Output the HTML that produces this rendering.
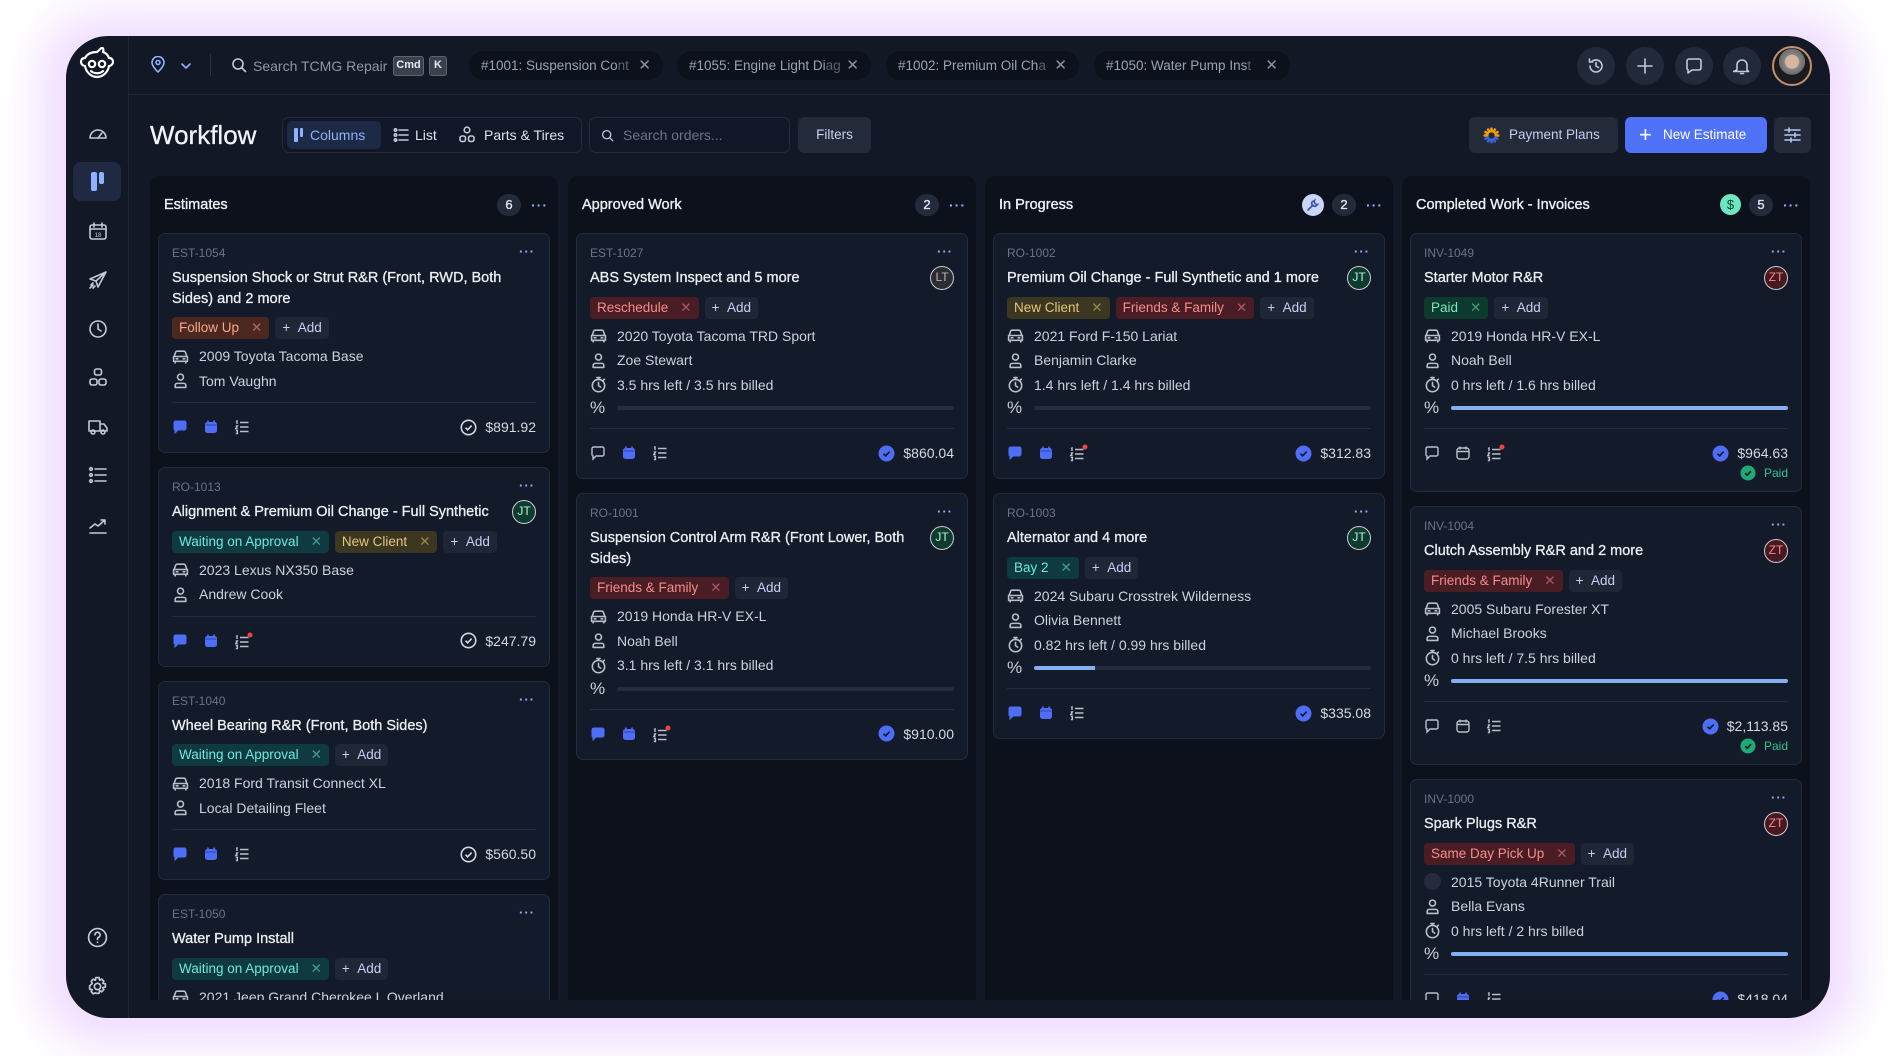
<!DOCTYPE html>
<html><head><meta charset="utf-8">
<style>
*{box-sizing:border-box;margin:0;padding:0}
body{width:1896px;height:1056px;overflow:hidden;background:#fff;font-family:"Liberation Sans",sans-serif;position:relative}
.glow{position:absolute;left:40px;top:14px;width:1816px;height:1030px;border-radius:60px;background:#efdcff;filter:blur(22px)}
.win{position:absolute;left:66px;top:36px;width:1764px;height:982px;border-radius:42px;background:#121826;overflow:hidden}
.side{position:absolute;left:0;top:0;width:63px;height:100%;border-right:1px solid #1e2535}
.top{position:absolute;left:63px;top:0;right:0;height:59px;border-bottom:1px solid #1f2636}
svg{display:block}
.ic{position:absolute;stroke:#c3c9d5;fill:none;stroke-width:1.6;stroke-linecap:round;stroke-linejoin:round}
.tab{position:absolute;top:15px;height:29px;border-radius:15px;background:#0c111c;color:#9aa3b2;font-size:13.5px;line-height:29px;padding-left:12px;white-space:nowrap;overflow:hidden}
.tab span{position:absolute;right:12px;top:0;color:#8a93a3;font-size:15px;background:#0c111c}
.tab i{font-style:normal;color:#5a6270}
.cbtn{position:absolute;top:11px;width:38px;height:38px;border-radius:50%;background:#222a3a}
.col{position:absolute;top:140px;width:408px;height:824px;background:#0c111c;border-radius:10px 10px 0 0;overflow:hidden}
.colh{height:57px;display:flex;align-items:center;padding:0 10px 0 14px;color:#eef0f4;font-size:14.5px;font-weight:400;-webkit-text-stroke:.35px #eef0f4}
.colh .sp{flex:1}
.cnt{width:24px;height:22px;border-radius:11px;background:#232a3a;color:#d7dbe3;font-size:13px;text-align:center;line-height:22px;margin-left:8px}
.dots{color:#8fb1ff;font-size:14px;letter-spacing:1px;margin-left:10px;font-weight:700;-webkit-text-stroke:0}
.card{margin:0 8px 14px 8px;background:#131a29;border:1px solid #232b3c;border-radius:7px;padding:12px 13px 0 13px;position:relative}
.cid{height:14px;font-size:12px;color:#6b7384;line-height:14px}
.cdots{position:absolute;right:14px;top:10px;color:#8fb1ff;font-size:13px;font-weight:700;letter-spacing:1px}
.ttl{margin-top:8px;font-size:14.5px;line-height:20.5px;color:#eceef2;font-weight:400;-webkit-text-stroke:.3px #eceef2;padding-right:36px;position:relative}
.av{position:absolute;right:0;top:-2px;width:24px;height:24px;border-radius:50%;font-size:12px;line-height:21px;text-align:center;font-weight:400;border:1.5px solid #c9ccd2;-webkit-text-stroke:0}
.jt{background:#0e3b2f;color:#b6f3d8}
.lt{background:#2c2d33;color:#b8b3ad}
.zt{background:#4a1820;color:#f28c8c}
.tags{margin-top:8px;display:flex;gap:6px;height:22px}
.tg{height:22px;border-radius:4px;font-size:13.5px;line-height:22px;padding:0 7px;white-space:nowrap}
.tg b{font-weight:400;opacity:.55;margin-left:12px}
.add{background:#1f2636;color:#c5d0f5}
.fu{background:#4b2720;color:#f6a789}
.wa{background:#0f3a40;color:#6ee7e0}
.nc{background:#3c3720;color:#e3c67e}
.ff{background:#4a1d25;color:#f58c8c}
.pd{background:#0c3a2e;color:#7fe5bd}
.rows{margin-top:5px}
.row{height:24.5px;display:flex;align-items:center;color:#ccd2dc;font-size:14px}
.row svg{margin-right:10px;flex:none;stroke:#b9bfca;fill:none;stroke-width:1.5;stroke-linecap:round;stroke-linejoin:round}
.pct{height:22px;display:flex;align-items:center}
.pct .p{width:17px;color:#c9ced8;font-size:17px;margin-right:10px}
.bar{flex:1;height:4px;border-radius:2px;background:#252c3d;overflow:hidden}
.bar div{height:100%;background:#86aef3}
.div{height:1px;background:#232b3c;margin-top:9px}
.foot{padding:12px 0 13px;position:relative}
.fr{height:24px;display:flex;align-items:center}
.fr .pr{margin-left:auto;display:flex;align-items:center;color:#d5d9e0;font-size:14px}
.fr .pr svg{margin-right:8px}
.paid{text-align:right;color:#34c48e;font-size:12px;height:20px;line-height:18px;margin-top:-2px;display:flex;justify-content:flex-end;align-items:center}
.paid svg{margin-right:8px}
.hb{position:absolute;top:81px;height:36px;border-radius:6px;font-size:13.5px;line-height:36px;color:#c4cfee}
</style></head><body>
<svg width="0" height="0" style="position:absolute">
<defs>
<symbol id="car" viewBox="0 0 16 16"><path d="M2 8l1.5-4.2C3.7 3.3 4.2 3 4.7 3h6.6c.5 0 1 .3 1.2.8L14 8M1.5 8h13v4.5H1.5zM3 12.5v1.5M13 12.5v1.5M4 10.2h1.5M10.5 10.2H12"/></symbol>
<symbol id="usr" viewBox="0 0 16 16"><circle cx="8" cy="4.8" r="2.8"/><path d="M3 14.5v-2c0-1 .8-1.8 1.8-1.8h6.4c1 0 1.8.8 1.8 1.8v2z"/></symbol>
<symbol id="clk" viewBox="0 0 16 16"><circle cx="8" cy="9" r="5.8"/><path d="M8 6v3l2 1.5M6.5 1.5h3M8 1.5v1.7M12.5 4l1-1"/></symbol>
<symbol id="chatf" viewBox="0 0 16 16"><path d="M2 3.5C2 2.7 2.7 2 3.5 2h9c.8 0 1.5.7 1.5 1.5v6c0 .8-.7 1.5-1.5 1.5H6l-3 3v-3h0C2.4 11 2 10.4 2 9.5z" fill="#4f6ef7" stroke="#4f6ef7"/></symbol>
<symbol id="chato" viewBox="0 0 16 16"><path d="M2 3.5C2 2.7 2.7 2 3.5 2h9c.8 0 1.5.7 1.5 1.5v6c0 .8-.7 1.5-1.5 1.5H6l-3 3v-3h0C2.4 11 2 10.4 2 9.5z" fill="none" stroke="#b9bfca" stroke-width="1.4"/></symbol>
<symbol id="calf" viewBox="0 0 16 16"><rect x="2" y="3" width="12" height="11" rx="2.5" fill="#4f6ef7"/><path d="M5 1.5v3M11 1.5v3" stroke="#4f6ef7" stroke-width="1.6"/><path d="M2.5 6h11" stroke="#2a43b0" stroke-width="1"/></symbol>
<symbol id="calo" viewBox="0 0 16 16"><rect x="2" y="3" width="12" height="11" rx="2.5" fill="none" stroke="#b9bfca" stroke-width="1.4"/><path d="M5 1.5v3M11 1.5v3M2 6.5h12" stroke="#b9bfca" stroke-width="1.4"/></symbol>
<symbol id="lst" viewBox="0 0 16 16"><path d="M6 3.5h8.5M6 8h8.5M6 12.5h8.5M2 2.5l1-.5v3M1.8 7h1.6L1.8 9.5h1.8M1.8 11.5h1.6v3H1.8" fill="none" stroke="#b9bfca" stroke-width="1.4"/></symbol>
<symbol id="chko" viewBox="0 0 16 16"><circle cx="8" cy="8" r="6.8" fill="none" stroke="#d5d9e0" stroke-width="1.5"/><path d="M5.2 8.2l2 2 3.8-4" fill="none" stroke="#d5d9e0" stroke-width="1.5"/></symbol>
<symbol id="chkb" viewBox="0 0 16 16"><circle cx="8" cy="8" r="7.5" fill="#4f6ef7"/><path d="M5.2 8.2l2 2 3.8-4" fill="none" stroke="#101828" stroke-width="1.6"/></symbol>
<symbol id="chkg" viewBox="0 0 16 16"><circle cx="8" cy="8" r="7.5" fill="#1fa878"/><path d="M5.2 8.2l2 2 3.8-4" fill="none" stroke="#0c1a14" stroke-width="1.6"/></symbol>
</defs></svg>
<div class="glow"></div>
<div class="win">
 <div class="side">
  <svg style="position:absolute;left:12px;top:11px" width="38" height="38" viewBox="0 0 38 38" fill="none" stroke="#fff" stroke-width="2.2" stroke-linecap="round" stroke-linejoin="round"><path d="M19 5c-6 0-10 2-12 6-3 0-4 2-4 4s2 4 4 4c1 6 6 11 12 11s11-5 12-11c2 0 4-2 4-4s-1-4-4-4c-1-3-3-5-6-6 1-2 0-4-1-5-1 2-3 3-5 5z"/><circle cx="14" cy="17" r="3.2"/><circle cx="24" cy="17" r="3.2"/><path d="M13 24c3 3 9 3 12 0"/></svg>
  <svg class="ic" style="left:22px;top:88px" width="20" height="20" viewBox="0 0 20 20"><path d="M2 14a8 8 0 0 1 16 0z"/><path d="M10 14l4-5"/></svg>
  <div style="position:absolute;left:7px;top:126px;width:48px;height:39px;border-radius:8px;background:#1f2a42"></div>
  <div style="position:absolute;left:25px;top:136px;width:6px;height:19px;border-radius:2px;background:#8fb1ff"></div>
  <div style="position:absolute;left:33px;top:136px;width:5px;height:12px;border-radius:2px;background:#8fb1ff"></div>
  <svg class="ic" style="left:22px;top:185px" width="20" height="20" viewBox="0 0 20 20"><rect x="2" y="4" width="16" height="14" rx="2"/><path d="M2 8h16M6 2v4M14 2v4"/><text x="10" y="16" font-size="6" fill="#c3c9d5" stroke="none" text-anchor="middle" font-family="Liberation Sans">18</text></svg>
  <svg class="ic" style="left:22px;top:234px" width="20" height="20" viewBox="0 0 20 20"><path d="M18 2L2 9l6 2 2 6zM8 11l10-9M3 15l2-2M2 18l3-3M5 18l2-2"/></svg>
  <svg class="ic" style="left:22px;top:283px" width="20" height="20" viewBox="0 0 20 20"><circle cx="10" cy="10" r="8"/><path d="M10 5v5l3 2"/></svg>
  <svg class="ic" style="left:22px;top:331px" width="20" height="20" viewBox="0 0 20 20"><rect x="6.5" y="2" width="7" height="6" rx="2"/><rect x="2" y="12" width="7" height="6" rx="2"/><rect x="11" y="12" width="7" height="6" rx="2"/></svg>
  <svg class="ic" style="left:21px;top:381px" width="22" height="20" viewBox="0 0 22 20"><path d="M2 4h11v10H2zM13 7h4l3 4v3h-7"/><circle cx="6" cy="15" r="2"/><circle cx="16" cy="15" r="2"/></svg>
  <svg class="ic" style="left:22px;top:429px" width="20" height="20" viewBox="0 0 20 20"><circle cx="3" cy="4" r="1.3"/><circle cx="3" cy="10" r="1.3"/><circle cx="3" cy="16" r="1.3"/><path d="M7 4h11M7 10h11M7 16h11"/></svg>
  <svg class="ic" style="left:22px;top:479px" width="20" height="20" viewBox="0 0 20 20"><path d="M2 13l5-4 3 2 7-6M13 5h4v4M2 18h16"/></svg>
  <svg class="ic" style="left:21px;top:891px" width="21" height="21" viewBox="0 0 20 20"><circle cx="10" cy="10" r="8.5"/><path d="M7.5 7.5a2.5 2.5 0 1 1 3.5 2.3c-.7.3-1 .8-1 1.5v.5M10 14.5v.1"/></svg>
  <svg class="ic" style="left:21px;top:940px" width="21" height="21" viewBox="0 0 20 20"><circle cx="10" cy="10" r="3"/><path d="M8.5 1.5h3l.5 2.5 2-1 2 2-1 2 2.5.5v3l-2.5.5 1 2-2 2-2-1-.5 2.5h-3L8 16l-2 1-2-2 1-2-2.5-.5v-3L5 7 4 5l2-2 2 1z"/></svg>
 </div>
 <div class="top">
  <svg class="ic" style="left:21px;top:20px" width="16" height="18" viewBox="0 0 16 18"><path d="M8 16s-6-5.5-6-9.5a6 6 0 0 1 12 0C14 10.5 8 16 8 16z" stroke="#8fb1ff"/><circle cx="8" cy="6.5" r="2" stroke="#8fb1ff"/></svg>
  <svg class="ic" style="left:51px;top:26px" width="12" height="8" viewBox="0 0 12 8"><path d="M2 2l4 4 4-4" stroke="#8fb1ff"/></svg>
  <div style="position:absolute;left:81px;top:18px;width:1px;height:22px;background:#2a3142"></div>
  <svg class="ic" style="left:102px;top:21px" width="16" height="16" viewBox="0 0 16 16"><circle cx="7" cy="7" r="5"/><path d="M11 11l3.5 3.5"/></svg>
  <div style="position:absolute;left:124px;top:21px;color:#8f97a6;font-size:14px;line-height:18px">Search TCMG Repair</div>
  <div style="position:absolute;left:264px;top:20px;width:31px;height:20px;border:1.5px solid #5d6574;background:#3a414e;border-radius:3px;color:#e8eaee;font-size:11px;line-height:17px;text-align:center;font-weight:700">Cmd</div>
  <div style="position:absolute;left:300px;top:20px;width:18px;height:20px;border:1.5px solid #5d6574;background:#3a414e;border-radius:3px;color:#e8eaee;font-size:11px;line-height:17px;text-align:center;font-weight:700">K</div>
  <div class="tab" style="left:340px;width:194px">#1001: Suspension Co<i>nt</i><span>✕</span></div>
  <div class="tab" style="left:548px;width:194px">#1055: Engine Light Di<i>ag</i><span>✕</span></div>
  <div class="tab" style="left:757px;width:193px">#1002: Premium Oil Ch<i>a</i><span>✕</span></div>
  <div class="tab" style="left:965px;width:196px">#1050: Water Pump Ins<i>t</i><span>✕</span></div>
  <div class="cbtn" style="left:1448px"><svg class="ic" style="left:10px;top:10px" width="18" height="18" viewBox="0 0 18 18"><path d="M3 9a6 6 0 1 0 2-4.5M2.5 2v3h3M9 5.5V9l2.5 1.5"/></svg></div>
  <div class="cbtn" style="left:1497px"><svg class="ic" style="left:10px;top:10px" width="18" height="18" viewBox="0 0 18 18"><path d="M9 2v14M2 9h14"/></svg></div>
  <div class="cbtn" style="left:1546px"><svg class="ic" style="left:10px;top:10px" width="18" height="18" viewBox="0 0 18 18"><path d="M2 4a2 2 0 0 1 2-2h10a2 2 0 0 1 2 2v7a2 2 0 0 1-2 2H7l-4 3v-3.2A2 2 0 0 1 2 11z"/></svg></div>
  <div class="cbtn" style="left:1594px"><svg class="ic" style="left:10px;top:10px" width="18" height="18" viewBox="0 0 18 18"><path d="M4 13V8a5 5 0 0 1 10 0v5l1.5 1.5h-15zM7.5 16.5h3"/></svg></div>
  <div style="position:absolute;left:1643px;top:10px;width:40px;height:40px;border-radius:50%;border:2px solid #c7906a;background:radial-gradient(circle at 50% 38%,#d8b49c 0 24%,#888 25%,#6b6b6b 45%,#1b1b1d 46%);overflow:hidden"></div>
 </div>
 <div style="position:absolute;left:84px;top:82px;color:#f2f4f7;font-size:26px;line-height:34px;-webkit-text-stroke:.3px #f2f4f7">Workflow</div>
 <div style="position:absolute;left:216px;top:81px;width:300px;height:36px;border:1px solid #232b3c;border-radius:7px;background:#111726"></div>
 <div style="position:absolute;left:221px;top:85px;width:94px;height:28px;border-radius:5px;background:#1d2a45"></div>
 <div style="position:absolute;left:228px;top:92px;width:4px;height:14px;background:#8fb1ff;border-radius:1px"></div>
 <div style="position:absolute;left:234px;top:92px;width:3px;height:9px;background:#8fb1ff;border-radius:1px"></div>
 <div style="position:absolute;left:244px;top:90px;color:#8fb1ff;font-size:14px;line-height:18px">Columns</div>
 <svg class="ic" style="left:327px;top:91px" width="16" height="16" viewBox="0 0 16 16"><circle cx="2.5" cy="3" r="1.2"/><circle cx="2.5" cy="8" r="1.2"/><circle cx="2.5" cy="13" r="1.2"/><path d="M6 3h9M6 8h9M6 13h9"/></svg>
 <div style="position:absolute;left:349px;top:90px;color:#dfe3ea;font-size:14px;line-height:18px">List</div>
 <svg class="ic" style="left:393px;top:90px" width="16" height="17" viewBox="0 0 16 17"><circle cx="8" cy="4" r="2.8"/><rect x="1" y="10" width="5.5" height="5.5" rx="2"/><rect x="9.5" y="10" width="5.5" height="5.5" rx="2"/></svg>
 <div style="position:absolute;left:418px;top:90px;color:#dfe3ea;font-size:14px;line-height:18px">Parts &amp; Tires</div>
 <div style="position:absolute;left:523px;top:81px;width:201px;height:36px;border:1px solid #232b3c;border-radius:7px;background:#111726"></div>
 <svg class="ic" style="left:535px;top:93px" width="13" height="13" viewBox="0 0 16 16"><circle cx="7" cy="7" r="5"/><path d="M11 11l3.5 3.5"/></svg>
 <div style="position:absolute;left:557px;top:90px;color:#6b7384;font-size:14px;line-height:18px">Search orders...</div>
 <div class="hb" style="left:732px;width:73px;background:#232a3a;text-align:center;color:#c7d2f0">Filters</div>
 <div class="hb" style="left:1403px;width:149px;background:#232a3a"><svg style="position:absolute;left:14px;top:10px" width="17" height="17" viewBox="0 0 20 20"><g stroke-width="3" stroke-linecap="round"><path d="M10 2v3M14 3l-1.5 2.6M17 6l-2.6 1.5M18 10h-3M6 3l1.5 2.6M3 6l2.6 1.5M2 10h3" stroke="#f59e0b"/><path d="M17 14l-2.6-1.5M14 17l-1.5-2.6M10 18v-3M6 17l1.5-2.6M3 14l2.6-1.5" stroke="#3b64d8"/></g></svg><span style="position:absolute;left:40px">Payment Plans</span></div>
 <div class="hb" style="left:1559px;width:142px;background:#4f72f8;color:#fff"><span style="position:absolute;left:14px;top:0;font-size:22px;font-weight:300">+</span><span style="position:absolute;left:38px">New Estimate</span></div>
 <div class="hb" style="left:1708px;width:37px;background:#232a3a"><svg class="ic" style="left:10px;top:10px" width="17" height="16" viewBox="0 0 17 16"><path d="M1 3h15M1 8h15M1 13h15M5 1v4M11 6v4M7 11v4" stroke="#b8c6ef"/></svg></div>

 <!-- Estimates -->
 <div class="col" style="left:84px">
  <div class="colh">Estimates<div class="sp"></div><div class="cnt">6</div><div class="dots">···</div></div>
  <div class="card"><div class="cid">EST-1054</div><div class="cdots">···</div>
   <div class="ttl" style="padding-right:0">Suspension Shock or Strut R&amp;R (Front, RWD, Both Sides) and 2 more</div>
   <div class="tags"><div class="tg fu">Follow Up<b>✕</b></div><div class="tg add">+ &nbsp;Add</div></div>
   <div class="rows"><div class="row"><svg width="17" height="17"><use href="#car"/></svg>2009 Toyota Tacoma Base</div><div class="row"><svg width="17" height="17"><use href="#usr"/></svg>Tom Vaughn</div></div>
   <div class="div"></div><div class="foot"><div class="fr"><svg width="31" height="16"><use href="#chatf" width="16" height="16"/></svg><svg width="31" height="16"><use href="#calf" width="16" height="16"/></svg><svg width="16" height="16"><use href="#lst"/></svg><div class="pr"><svg width="17" height="17"><use href="#chko"/></svg>$891.92</div></div></div>
  </div>
  <div class="card"><div class="cid">RO-1013</div><div class="cdots">···</div>
   <div class="ttl">Alignment &amp; Premium Oil Change - Full Synthetic<div class="av jt">JT</div></div>
   <div class="tags"><div class="tg wa">Waiting on Approval<b>✕</b></div><div class="tg nc">New Client<b>✕</b></div><div class="tg add">+ &nbsp;Add</div></div>
   <div class="rows"><div class="row"><svg width="17" height="17"><use href="#car"/></svg>2023 Lexus NX350 Base</div><div class="row"><svg width="17" height="17"><use href="#usr"/></svg>Andrew Cook</div></div>
   <div class="div"></div><div class="foot"><div class="fr"><svg width="31" height="16"><use href="#chatf" width="16" height="16"/></svg><svg width="31" height="16"><use href="#calf" width="16" height="16"/></svg><svg width="20" height="18" viewBox="0 0 20 18"><use href="#lst" y="2" width="16" height="16"/><circle cx="16" cy="3" r="2.5" fill="#ef4444"/></svg><div class="pr"><svg width="17" height="17"><use href="#chko"/></svg>$247.79</div></div></div>
  </div>
  <div class="card"><div class="cid">EST-1040</div><div class="cdots">···</div>
   <div class="ttl">Wheel Bearing R&amp;R (Front, Both Sides)</div>
   <div class="tags"><div class="tg wa">Waiting on Approval<b>✕</b></div><div class="tg add">+ &nbsp;Add</div></div>
   <div class="rows"><div class="row"><svg width="17" height="17"><use href="#car"/></svg>2018 Ford Transit Connect XL</div><div class="row"><svg width="17" height="17"><use href="#usr"/></svg>Local Detailing Fleet</div></div>
   <div class="div"></div><div class="foot"><div class="fr"><svg width="31" height="16"><use href="#chatf" width="16" height="16"/></svg><svg width="31" height="16"><use href="#calf" width="16" height="16"/></svg><svg width="16" height="16"><use href="#lst"/></svg><div class="pr"><svg width="17" height="17"><use href="#chko"/></svg>$560.50</div></div></div>
  </div>
  <div class="card"><div class="cid">EST-1050</div><div class="cdots">···</div>
   <div class="ttl">Water Pump Install</div>
   <div class="tags"><div class="tg wa">Waiting on Approval<b>✕</b></div><div class="tg add">+ &nbsp;Add</div></div>
   <div class="rows"><div class="row"><svg width="17" height="17"><use href="#car"/></svg>2021 Jeep Grand Cherokee L Overland</div><div class="row"><svg width="17" height="17"><use href="#usr"/></svg>Fleet</div></div>
  </div>
 </div>

 <!-- Approved -->
 <div class="col" style="left:502px">
  <div class="colh">Approved Work<div class="sp"></div><div class="cnt">2</div><div class="dots">···</div></div>
  <div class="card"><div class="cid">EST-1027</div><div class="cdots">···</div>
   <div class="ttl">ABS System Inspect and 5 more<div class="av lt">LT</div></div>
   <div class="tags"><div class="tg ff">Reschedule<b>✕</b></div><div class="tg add">+ &nbsp;Add</div></div>
   <div class="rows"><div class="row"><svg width="17" height="17"><use href="#car"/></svg>2020 Toyota Tacoma TRD Sport</div><div class="row"><svg width="17" height="17"><use href="#usr"/></svg>Zoe Stewart</div><div class="row"><svg width="17" height="17"><use href="#clk"/></svg>3.5 hrs left / 3.5 hrs billed</div><div class="pct"><span class="p">%</span><div class="bar"></div></div></div>
   <div class="div"></div><div class="foot"><div class="fr"><svg width="31" height="16"><use href="#chato" width="16" height="16"/></svg><svg width="31" height="16"><use href="#calf" width="16" height="16"/></svg><svg width="16" height="16"><use href="#lst"/></svg><div class="pr"><svg width="17" height="17"><use href="#chkb"/></svg>$860.04</div></div></div>
  </div>
  <div class="card"><div class="cid">RO-1001</div><div class="cdots">···</div>
   <div class="ttl">Suspension Control Arm R&amp;R (Front Lower, Both Sides)<div class="av jt">JT</div></div>
   <div class="tags"><div class="tg ff">Friends &amp; Family<b>✕</b></div><div class="tg add">+ &nbsp;Add</div></div>
   <div class="rows"><div class="row"><svg width="17" height="17"><use href="#car"/></svg>2019 Honda HR-V EX-L</div><div class="row"><svg width="17" height="17"><use href="#usr"/></svg>Noah Bell</div><div class="row"><svg width="17" height="17"><use href="#clk"/></svg>3.1 hrs left / 3.1 hrs billed</div><div class="pct"><span class="p">%</span><div class="bar"></div></div></div>
   <div class="div"></div><div class="foot"><div class="fr"><svg width="31" height="16"><use href="#chatf" width="16" height="16"/></svg><svg width="31" height="16"><use href="#calf" width="16" height="16"/></svg><svg width="20" height="18" viewBox="0 0 20 18"><use href="#lst" y="2" width="16" height="16"/><circle cx="16" cy="3" r="2.5" fill="#ef4444"/></svg><div class="pr"><svg width="17" height="17"><use href="#chkb"/></svg>$910.00</div></div></div>
  </div>
 </div>

 <!-- In Progress -->
 <div class="col" style="left:919px">
  <div class="colh">In Progress<div class="sp"></div><div style="width:22px;height:22px;border-radius:50%;background:#c9d6f7;position:relative"><svg style="position:absolute;left:4px;top:4px" width="14" height="14" viewBox="0 0 14 14" fill="none" stroke="#3b4fb0" stroke-width="1.6" stroke-linecap="round"><path d="M2 12l5-5M8.5 2.5a3 3 0 0 0 3 4l-1.5 1.5a3 3 0 0 1-4-4z"/></svg></div><div class="cnt">2</div><div class="dots">···</div></div>
  <div class="card"><div class="cid">RO-1002</div><div class="cdots">···</div>
   <div class="ttl">Premium Oil Change - Full Synthetic and 1 more<div class="av jt">JT</div></div>
   <div class="tags"><div class="tg nc">New Client<b>✕</b></div><div class="tg ff">Friends &amp; Family<b>✕</b></div><div class="tg add">+ &nbsp;Add</div></div>
   <div class="rows"><div class="row"><svg width="17" height="17"><use href="#car"/></svg>2021 Ford F-150 Lariat</div><div class="row"><svg width="17" height="17"><use href="#usr"/></svg>Benjamin Clarke</div><div class="row"><svg width="17" height="17"><use href="#clk"/></svg>1.4 hrs left / 1.4 hrs billed</div><div class="pct"><span class="p">%</span><div class="bar"></div></div></div>
   <div class="div"></div><div class="foot"><div class="fr"><svg width="31" height="16"><use href="#chatf" width="16" height="16"/></svg><svg width="31" height="16"><use href="#calf" width="16" height="16"/></svg><svg width="20" height="18" viewBox="0 0 20 18"><use href="#lst" y="2" width="16" height="16"/><circle cx="16" cy="3" r="2.5" fill="#ef4444"/></svg><div class="pr"><svg width="17" height="17"><use href="#chkb"/></svg>$312.83</div></div></div>
  </div>
  <div class="card"><div class="cid">RO-1003</div><div class="cdots">···</div>
   <div class="ttl">Alternator and 4 more<div class="av jt">JT</div></div>
   <div class="tags"><div class="tg wa">Bay 2<b>✕</b></div><div class="tg add">+ &nbsp;Add</div></div>
   <div class="rows"><div class="row"><svg width="17" height="17"><use href="#car"/></svg>2024 Subaru Crosstrek Wilderness</div><div class="row"><svg width="17" height="17"><use href="#usr"/></svg>Olivia Bennett</div><div class="row"><svg width="17" height="17"><use href="#clk"/></svg>0.82 hrs left / 0.99 hrs billed</div><div class="pct"><span class="p">%</span><div class="bar"><div style="width:18%"></div></div></div></div>
   <div class="div"></div><div class="foot"><div class="fr"><svg width="31" height="16"><use href="#chatf" width="16" height="16"/></svg><svg width="31" height="16"><use href="#calf" width="16" height="16"/></svg><svg width="16" height="16"><use href="#lst"/></svg><div class="pr"><svg width="17" height="17"><use href="#chkb"/></svg>$335.08</div></div></div>
  </div>
 </div>

 <!-- Completed -->
 <div class="col" style="left:1336px">
  <div class="colh">Completed Work - Invoices<div class="sp"></div><div style="width:21px;height:21px;border-radius:50%;background:#6ee7c0;color:#0b3d2e;font-size:13px;text-align:center;line-height:21px;-webkit-text-stroke:0">$</div><div class="cnt">5</div><div class="dots">···</div></div>
  <div class="card"><div class="cid">INV-1049</div><div class="cdots">···</div>
   <div class="ttl">Starter Motor R&amp;R<div class="av zt">ZT</div></div>
   <div class="tags"><div class="tg pd">Paid<b>✕</b></div><div class="tg add">+ &nbsp;Add</div></div>
   <div class="rows"><div class="row"><svg width="17" height="17"><use href="#car"/></svg>2019 Honda HR-V EX-L</div><div class="row"><svg width="17" height="17"><use href="#usr"/></svg>Noah Bell</div><div class="row"><svg width="17" height="17"><use href="#clk"/></svg>0 hrs left / 1.6 hrs billed</div><div class="pct"><span class="p">%</span><div class="bar"><div style="width:100%"></div></div></div></div>
   <div class="div"></div><div class="foot" style="padding-bottom:8px"><div class="fr"><svg width="31" height="16"><use href="#chato" width="16" height="16"/></svg><svg width="31" height="16"><use href="#calo" width="16" height="16"/></svg><svg width="20" height="18" viewBox="0 0 20 18"><use href="#lst" y="2" width="16" height="16"/><circle cx="16" cy="3" r="2.5" fill="#ef4444"/></svg><div class="pr"><svg width="17" height="17"><use href="#chkb"/></svg>$964.63</div></div><div class="paid"><svg width="16" height="16"><use href="#chkg"/></svg>Paid</div></div>
  </div>
  <div class="card"><div class="cid">INV-1004</div><div class="cdots">···</div>
   <div class="ttl">Clutch Assembly R&amp;R and 2 more<div class="av zt">ZT</div></div>
   <div class="tags"><div class="tg ff">Friends &amp; Family<b>✕</b></div><div class="tg add">+ &nbsp;Add</div></div>
   <div class="rows"><div class="row"><svg width="17" height="17"><use href="#car"/></svg>2005 Subaru Forester XT</div><div class="row"><svg width="17" height="17"><use href="#usr"/></svg>Michael Brooks</div><div class="row"><svg width="17" height="17"><use href="#clk"/></svg>0 hrs left / 7.5 hrs billed</div><div class="pct"><span class="p">%</span><div class="bar"><div style="width:100%"></div></div></div></div>
   <div class="div"></div><div class="foot" style="padding-bottom:8px"><div class="fr"><svg width="31" height="16"><use href="#chato" width="16" height="16"/></svg><svg width="31" height="16"><use href="#calo" width="16" height="16"/></svg><svg width="16" height="16"><use href="#lst"/></svg><div class="pr"><svg width="17" height="17"><use href="#chkb"/></svg>$2,113.85</div></div><div class="paid"><svg width="16" height="16"><use href="#chkg"/></svg>Paid</div></div>
  </div>
  <div class="card"><div class="cid">INV-1000</div><div class="cdots">···</div>
   <div class="ttl">Spark Plugs R&amp;R<div class="av zt">ZT</div></div>
   <div class="tags"><div class="tg ff">Same Day Pick Up<b>✕</b></div><div class="tg add">+ &nbsp;Add</div></div>
   <div class="rows"><div class="row"><div style="width:17px;height:17px;border-radius:50%;background:#252b3a;margin-right:10px"></div>2015 Toyota 4Runner Trail</div><div class="row"><svg width="17" height="17"><use href="#usr"/></svg>Bella Evans</div><div class="row"><svg width="17" height="17"><use href="#clk"/></svg>0 hrs left / 2 hrs billed</div><div class="pct"><span class="p">%</span><div class="bar"><div style="width:100%"></div></div></div></div>
   <div class="div"></div><div class="foot"><div class="fr"><svg width="31" height="16"><use href="#chato" width="16" height="16"/></svg><svg width="31" height="16"><use href="#calf" width="16" height="16"/></svg><svg width="16" height="16"><use href="#lst"/></svg><div class="pr"><svg width="17" height="17"><use href="#chkb"/></svg>$418.04</div></div></div>
  </div>
 </div>
</div>
</body></html>
